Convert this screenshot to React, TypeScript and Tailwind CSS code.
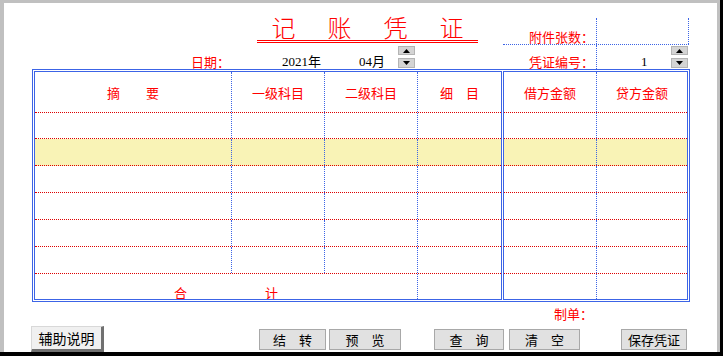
import React from 'react';

function Spin() {
  return (
    <div className="flex flex-col gap-[3px]">
      <div className="w-[17px] h-[9px] bg-[#d4d4d4] border border-[#b4b4b4] flex items-center justify-center">
        <svg width="7" height="4" viewBox="0 0 7 4">
          <polygon points="3.5,0 7,4 0,4" fill="#000" />
        </svg>
      </div>
      <div className="w-[17px] h-[10px] bg-[#d4d4d4] border border-[#b4b4b4] flex items-center justify-center">
        <svg width="7" height="4" viewBox="0 0 7 4">
          <polygon points="0,0 7,0 3.5,4" fill="#000" />
        </svg>
      </div>
    </div>
  );
}

// row heights in the grid, the 2nd one is the highlighted row
const rows = [26, 27, 27, 27, 27, 27];

function LeftBox() {
  return (
    <div className="w-[468px] h-[229px] border border-[#3c64e6] flex flex-col">
      {/* header */}
      <div className="h-[41px] flex border-b border-dotted border-[#dd0000] text-[#ff0000]">
        <div className="w-[197px] border-r border-dotted border-[#3c64e6] flex items-center justify-center">摘　　要</div>
        <div className="w-[93px] border-r border-dotted border-[#3c64e6] flex items-center justify-center">一级科目</div>
        <div className="w-[93px] border-r border-dotted border-[#3c64e6] flex items-center justify-center">二级科目</div>
        <div className="flex-1 flex items-center justify-center">细　目</div>
      </div>
      {rows.map((h, i) => (
        <div
          key={i}
          className={`flex border-b border-dotted border-[#dd0000] ${i === 1 ? 'bg-[#f9f3b6]' : ''} ${h === 26 ? 'h-[26px]' : 'h-[27px]'}`}
        >
          <div className="w-[197px] border-r border-dotted border-[#3c64e6]" />
          <div className="w-[93px] border-r border-dotted border-[#3c64e6]" />
          <div className="w-[93px] border-r border-dotted border-[#3c64e6]" />
          <div className="flex-1" />
        </div>
      ))}
      {/* total */}
      <div className="h-[25px] flex overflow-hidden">
        <div className="w-[383px] border-r border-dotted border-[#3c64e6] pt-[11px] text-center text-[#ff0000]">合　　　　　　计</div>
        <div className="flex-1" />
      </div>
    </div>
  );
}

function RightBox() {
  return (
    <div className="w-[185px] h-[229px] border border-[#3c64e6] flex flex-col">
      <div className="h-[41px] flex border-b border-dotted border-[#dd0000] text-[#ff0000]">
        <div className="w-[93px] border-r border-dotted border-[#3c64e6] flex items-center justify-center">借方金额</div>
        <div className="flex-1 flex items-center justify-center">贷方金额</div>
      </div>
      {rows.map((h, i) => (
        <div
          key={i}
          className={`flex border-b border-dotted border-[#dd0000] ${i === 1 ? 'bg-[#f9f3b6]' : ''} ${h === 26 ? 'h-[26px]' : 'h-[27px]'}`}
        >
          <div className="w-[93px] border-r border-dotted border-[#3c64e6]" />
          <div className="flex-1" />
        </div>
      ))}
      <div className="h-[25px] flex">
        <div className="w-[93px] border-r border-dotted border-[#3c64e6]" />
        <div className="flex-1" />
      </div>
    </div>
  );
}

export default function App() {
  return (
    <div className="w-[723px] h-[356px] bg-black pr-[3px] pb-[4px] font-['Noto_Sans_CJK_SC',sans-serif] text-[13px] leading-[15px] text-black">
      <div className="h-full bg-white border-l-4 border-t-[3px] border-r-[3px] border-[#c0c0c0] overflow-hidden">
        {/* Title / date / voucher info */}
        <div className="flex h-[66px]">
          <div className="w-[499px] flex flex-col">
            <div className="ml-[253px] mt-[11px] w-[221px] h-[29px] border-b-[3px] border-double border-[#ff0000] flex justify-center gap-[32px] text-[24px] leading-[26px] text-[#ff0000] font-light">
              <span className="w-[24px] text-center">记</span>
              <span className="w-[24px] text-center">账</span>
              <span className="w-[24px] text-center">凭</span>
              <span className="w-[24px] text-center">证</span>
            </div>
            <div className="mt-[2px] h-[24px] flex">
              <span className="ml-[187px] self-end text-[#ff0000]">日期：</span>
              <span className="ml-[52px] self-end font-['Liberation_Serif','Noto_Sans_CJK_SC',serif]">2021年</span>
              <span className="ml-[38px] self-end font-['Liberation_Serif','Noto_Sans_CJK_SC',serif]">04月</span>
              <div className="ml-[13px] pt-[1px]">
                <Spin />
              </div>
            </div>
          </div>
          <div className="w-[186px] flex flex-col">
            <div className="mt-[15px] h-[27px] flex border-b border-dotted border-[#3c64e6]">
              <div className="w-[93px] flex items-end justify-end pr-[2px] text-[#ff0000]">附件张数：</div>
              <div className="w-[93px] border-l border-r border-dotted border-[#3c64e6]" />
            </div>
            <div className="h-[24px] flex">
              <div className="w-[93px] flex items-end justify-end pr-[2px] text-[#ff0000]">凭证编号：</div>
              <div className="w-[93px] border-l border-dotted border-[#3c64e6] flex">
                <span className="ml-[44px] self-end font-['Liberation_Serif',serif]">1</span>
                <div className="ml-auto mr-[1px] pt-[1px]">
                  <Spin />
                </div>
              </div>
            </div>
          </div>
        </div>

        {/* Voucher table */}
        <div className="ml-[28px] w-[658px] h-[233px] border border-[#3c64e6] p-[1px] flex gap-[1px]">
          <LeftBox />
          <RightBox />
        </div>

        <div className="mt-[4px] w-[589px] text-right text-[#ff0000]">制单：</div>

        {/* Buttons */}
        <div className="mt-[5px] flex items-start">
          <button className="ml-[27px] w-[73px] h-[26px] bg-[#f0f0f0] border-t border-l border-r-[3px] border-b-[3px] border-t-[#d8d8d8] border-l-[#d8d8d8] border-r-[#707070] border-b-[#707070] text-[14px] leading-[16px] flex items-center justify-center">
            辅助说明
          </button>
          <button className="ml-[155px] mt-[3px] w-[67px] h-[21px] bg-[#e1e1e1] border border-[#a8a8a8] flex items-center justify-center">结　转</button>
          <button className="ml-[3px] mt-[3px] w-[72px] h-[21px] bg-[#e1e1e1] border border-[#a8a8a8] flex items-center justify-center">预　览</button>
          <button className="ml-[33px] mt-[3px] w-[70px] h-[21px] bg-[#e1e1e1] border border-[#a8a8a8] flex items-center justify-center">查　询</button>
          <button className="ml-[5px] mt-[3px] w-[71px] h-[21px] bg-[#e1e1e1] border border-[#a8a8a8] flex items-center justify-center">清　空</button>
          <button className="ml-[41px] mt-[3px] w-[66px] h-[21px] bg-[#e1e1e1] border border-[#a8a8a8] flex items-center justify-center">保存凭证</button>
        </div>
      </div>
    </div>
  );
}
